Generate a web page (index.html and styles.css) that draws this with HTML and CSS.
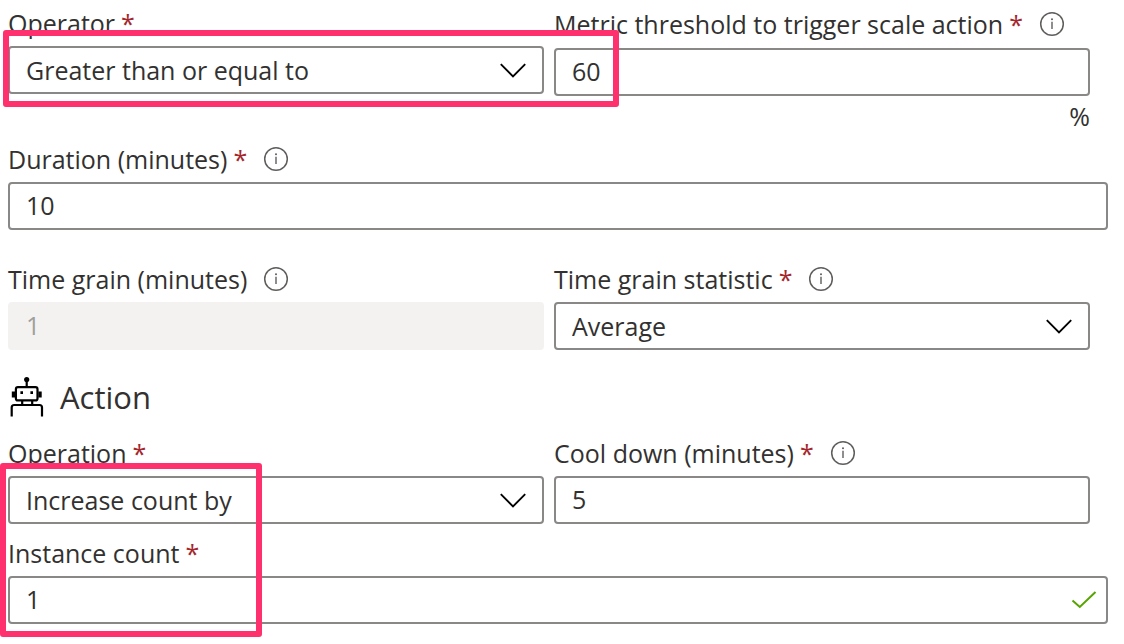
FILE: index.html
```html
<!DOCTYPE html>
<html lang="en">

<head>
    <meta charset="UTF-8">
    <meta name="viewport" content="width=device-width, initial-scale=1.0">
    <title>Scale rule</title>
    <link rel="stylesheet" href="styles.css">
</head>

<body>
    <!-- shared icons -->
    <svg class="sprite" aria-hidden="true">
        <symbol id="icon-info" viewBox="0 0 26 26">
            <circle cx="13" cy="13" r="11.3" fill="none" stroke="#605e5c" stroke-width="1.5" />
            <path d="M13 10.8V18" stroke="#605e5c" stroke-width="1.4" />
            <circle cx="13" cy="8.2" r="1" fill="#605e5c" />
        </symbol>
        <symbol id="icon-chevron" viewBox="0 0 26 16">
            <path d="M0.8 2.2L13 14.4L25.2 2.2" fill="none" stroke="#000" stroke-width="1.9" />
        </symbol>
    </svg>

    <form class="scale-form">
        <div class="row highlighted">
            <div class="field">
                <div class="field-label">
                    <label for="operator">Operator</label>
                    <span class="required">*</span>
                </div>
                <div class="control">
                    <select id="operator" name="operator">
                        <option>Greater than or equal to</option>
                    </select>
                    <svg class="chevron"><use href="#icon-chevron" /></svg>
                </div>
            </div>
            <div class="field">
                <div class="field-label tall">
                    <label for="threshold">Metric threshold to trigger scale action</label>
                    <span class="required">*</span>
                    <button type="button" class="info" aria-label="Info"><svg><use href="#icon-info" /></svg></button>
                </div>
                <div class="control">
                    <input type="text" id="threshold" name="threshold" value="60">
                </div>
                <div class="unit">%</div>
            </div>
            <div class="highlight highlight-condition"></div>
        </div>

        <div class="field">
            <div class="field-label">
                <label for="duration">Duration (minutes)</label>
                <span class="required">*</span>
                <button type="button" class="info" aria-label="Info"><svg><use href="#icon-info" /></svg></button>
            </div>
            <div class="control">
                <input type="text" id="duration" name="duration" value="10">
            </div>
        </div>

        <div class="row grain">
            <div class="field">
                <div class="field-label">
                    <label for="grain">Time grain (minutes)</label>
                    <button type="button" class="info" aria-label="Info"><svg><use href="#icon-info" /></svg></button>
                </div>
                <div class="control">
                    <input type="text" id="grain" name="grain" value="1" disabled>
                </div>
            </div>
            <div class="field">
                <div class="field-label">
                    <label for="statistic">Time grain statistic</label>
                    <span class="required">*</span>
                    <button type="button" class="info" aria-label="Info"><svg><use href="#icon-info" /></svg></button>
                </div>
                <div class="control">
                    <select id="statistic" name="statistic">
                        <option>Average</option>
                    </select>
                    <svg class="chevron"><use href="#icon-chevron" /></svg>
                </div>
            </div>
        </div>

        <h2 class="section-title">
            <svg class="robot" viewBox="0 0 36 42" fill="none" stroke="#000" stroke-width="2.2">
                <circle cx="18.7" cy="3.5" r="2.6" fill="#000" stroke="none" />
                <path d="M18.7 4V12" />
                <rect x="7.9" y="11.2" width="21.6" height="13.2" rx="2" />
                <path d="M5.5 15.5V21.5M32 15.5V21.5" stroke-width="3.4" />
                <path d="M13.7 15.2V18M23.7 15.2V18" stroke-width="2.6" />
                <path d="M14.2 24.5V29M24.2 24.5V29" />
                <path d="M3.7 40.5V31.5Q3.7 29 6.2 29H31.5Q34 29 34 31.5V40.5" />
            </svg>
            Action
        </h2>

        <div class="action highlighted">
            <div class="row">
                <div class="field">
                    <div class="field-label">
                        <label for="operation">Operation</label>
                        <span class="required">*</span>
                    </div>
                    <div class="control">
                        <select id="operation" name="operation">
                            <option>Increase count by</option>
                        </select>
                        <svg class="chevron"><use href="#icon-chevron" /></svg>
                    </div>
                </div>
                <div class="field">
                    <div class="field-label">
                        <label for="cooldown">Cool down (minutes)</label>
                        <span class="required">*</span>
                        <button type="button" class="info" aria-label="Info"><svg><use href="#icon-info" /></svg></button>
                    </div>
                    <div class="control">
                        <input type="text" id="cooldown" name="cooldown" value="5">
                    </div>
                </div>
            </div>
            <div class="field">
                <div class="field-label">
                    <label for="count">Instance count</label>
                    <span class="required">*</span>
                </div>
                <div class="control">
                    <input type="text" id="count" name="count" value="1">
                    <svg class="valid" viewBox="0 0 26 18">
                        <path d="M1.5 9.5L8.8 16L24.5 1" fill="none" stroke="#57a300" stroke-width="2" />
                    </svg>
                </div>
            </div>
            <div class="highlight highlight-action"></div>
        </div>
    </form>
</body>

</html>
```

FILE: styles.css
```css
* {
    box-sizing: border-box;
}

body {
    margin: 0;
    padding: 2px 16px 16px 8px;
    background: #fff;
    color: #323130;
    font-family: "Open Sans", "Noto Sans", sans-serif;
    font-size: 25px;
}

.sprite {
    display: none;
}

.row {
    display: grid;
    grid-template-columns: 1fr 1fr;
    gap: 10px;
    padding-right: 18px;
}

.grain {
    margin-top: 28px;
}

.field-label {
    display: flex;
    align-items: center;
    height: 44px;
    padding-bottom: 3px;
    white-space: nowrap;
}

.field-label.tall {
    height: 46px;
}

.required {
    margin-left: 6px;
    color: #a4262c;
    font-weight: 500;
}

.info {
    display: flex;
    margin-left: 16px;
    padding: 0;
    border: none;
    background: none;
}

.info svg {
    width: 26px;
    height: 26px;
}

/* the control and its icon share one grid cell */
.control {
    display: grid;
    align-items: center;
}

.control > * {
    grid-area: 1 / 1;
}

input,
select {
    width: 100%;
    height: 48px;
    padding: 0 16px;
    border: 2px solid #8a8886;
    border-radius: 4px;
    background: #fff;
    color: inherit;
    font: inherit;
    appearance: none;
}

input {
    padding-bottom: 2px;
}

input:disabled {
    border-color: #f3f2f1;
    background: #f3f2f1;
    color: #a19f9d;
}

.chevron,
.valid {
    justify-self: end;
    width: 26px;
    height: 16px;
    margin-right: 18px;
    pointer-events: none;
}

.valid {
    height: 18px;
    margin-right: 11px;
}

.unit {
    height: 42px;
    line-height: 40px;
    text-align: right;
}

.section-title {
    display: flex;
    align-items: center;
    gap: 16px;
    height: 42px;
    margin: 26px 0 14px;
    font-size: 31px;
    font-weight: 400;
}

.robot {
    width: 36px;
    height: 42px;
}

.action > .field {
    margin-top: 8px;
}

.highlighted {
    position: relative;
}

.highlight {
    position: absolute;
    border: 6px solid #ff306e;
    border-radius: 3px;
    pointer-events: none;
}

.highlight-condition {
    top: 28px;
    left: -5px;
    width: 56%;
    height: 77px;
}

.highlight-action {
    top: 31px;
    bottom: -13px;
    left: -8px;
    width: 262px;
}
```
